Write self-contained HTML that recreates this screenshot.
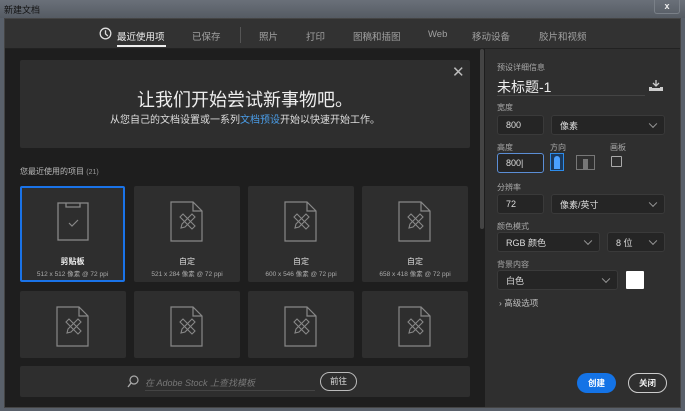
<!DOCTYPE html>
<html><head><meta charset="utf-8"><style>
*{margin:0;padding:0;box-sizing:border-box}
body{width:685px;height:411px;overflow:hidden;background:#59606a;font-family:"Liberation Sans","Noto Sans CJK SC",sans-serif;position:relative}
.a{position:absolute}
.t{color:#ddd;font-size:11px;white-space:nowrap}
.lbl{position:absolute;color:#a8a8a8;font-size:8px}
.box{position:absolute;background:#252525;border:1px solid #3a3a3a;border-radius:3px;color:#ddd;font-size:9px;padding-left:8px;display:flex;align-items:center}
.chev{position:absolute;right:8px;top:50%;width:6px;height:6px;border-right:1px solid #999;border-bottom:1px solid #999;transform:translateY(-70%) rotate(45deg)}
.card{position:absolute;background:#2e2e2e;border-radius:2px}
.nav{position:absolute;top:29px;font-size:9.5px;color:#a0a0a0}
</style></head><body>
<div class="a" style="left:0;top:0;width:685px;height:18px;background:linear-gradient(#6a7079,#555b63)"></div>
<div class="a t" style="left:4px;top:3px;font-size:9px;color:#111">新建文档</div>
<div class="a" style="left:654px;top:0;width:26px;height:14px;border:1px solid #7a8088;border-top:none;border-radius:0 0 3px 3px;color:#eee;font-size:9px;text-align:center;line-height:12px;font-weight:bold">x</div>
<div class="a" style="left:4px;top:18px;width:677px;height:390px;background:#1e1e1e;border:1px solid #444"></div>
<div class="a" style="left:5px;top:19px;width:675px;height:30px;background:#323232;border-bottom:1px solid #222"></div>
<svg class="a" style="left:99px;top:27px" width="13" height="13" viewBox="0 0 13 13"><circle cx="6.5" cy="6.5" r="5.3" fill="none" stroke="#ddd" stroke-width="1.3"/><path d="M6.5 3.3V6.8L8.8 9" fill="none" stroke="#ddd" stroke-width="1.3"/></svg>
<div class="nav" style="left:117px;color:#eee">最近使用项</div>
<div class="a" style="left:117px;top:45px;width:49px;height:2px;background:#eee"></div>
<div class="nav" style="left:192px">已保存</div>
<div class="a" style="left:240px;top:27px;width:1px;height:16px;background:#555"></div>
<div class="nav" style="left:259px">照片</div>
<div class="nav" style="left:306px">打印</div>
<div class="nav" style="left:353px">图稿和插图</div>
<div class="nav" style="left:428px">Web</div>
<div class="nav" style="left:472px">移动设备</div>
<div class="nav" style="left:539px">胶片和视频</div>
<div class="a" style="left:480px;top:49px;width:4px;height:180px;background:#444;border-radius:2px"></div>
<div class="a" style="left:485px;top:49px;width:195px;height:358px;background:#2f2f2f"></div>
<!-- banner -->
<div class="card" style="left:20px;top:60px;width:450px;height:88px"></div>
<div class="a" style="left:452px;top:63px;color:#bbb;font-size:15px">✕</div>
<div class="a" style="left:20px;width:450px;top:86px;text-align:center;color:#eee;font-size:18px">让我们开始尝试新事物吧。</div>
<div class="a" style="left:20px;width:450px;top:111px;text-align:center;color:#ddd;font-size:10px">从您自己的文档设置或一系列<span style="color:#4a9de8">文档预设</span>开始以快速开始工作。</div>
<div class="a" style="left:20px;top:166px;color:#bbb;font-size:8px">您最近使用的项目 <span style="font-size:7px;color:#999">(21)</span></div>
<!-- cards -->
<div class="card" style="left:20px;top:186px;width:105px;height:96px;border:2px solid #1a73e8"></div>
<svg class="a" style="left:57px;top:201px" width="32" height="40" viewBox="0 0 32 40"><rect x="1" y="2" width="30" height="37" fill="none" stroke="#888" stroke-width="1.3"/><path d="M9 2v4h14V2" fill="none" stroke="#888" stroke-width="1.3"/><path d="M12 22l3 3 6-6" fill="none" stroke="#888" stroke-width="1.2"/></svg>
<div class="a" style="left:20px;width:105px;top:256px;text-align:center;color:#eee;font-size:8px;font-weight:bold">剪贴板</div>
<div class="a" style="left:20px;width:105px;top:268px;text-align:center;color:#aaa;font-size:6.5px">512 x 512 像素 @ 72 ppi</div>
<div class="card" style="left:134px;top:186px;width:106px;height:96px"></div>
<div class="card" style="left:248px;top:186px;width:106px;height:96px"></div>
<div class="card" style="left:362px;top:186px;width:106px;height:96px"></div>
<div class="a" style="left:134px;width:106px;top:256px;text-align:center;color:#ddd;font-size:8px">自定</div>
<div class="a" style="left:134px;width:106px;top:268px;text-align:center;color:#aaa;font-size:6.5px">521 x 284 像素 @ 72 ppi</div>
<div class="a" style="left:248px;width:106px;top:256px;text-align:center;color:#ddd;font-size:8px">自定</div>
<div class="a" style="left:248px;width:106px;top:268px;text-align:center;color:#aaa;font-size:6.5px">600 x 546 像素 @ 72 ppi</div>
<div class="a" style="left:362px;width:106px;top:256px;text-align:center;color:#ddd;font-size:8px">自定</div>
<div class="a" style="left:362px;width:106px;top:268px;text-align:center;color:#aaa;font-size:6.5px">658 x 418 像素 @ 72 ppi</div>
<div class="card" style="left:20px;top:291px;width:106px;height:67px"></div>
<div class="card" style="left:134px;top:291px;width:106px;height:67px"></div>
<div class="card" style="left:248px;top:291px;width:106px;height:67px"></div>
<div class="card" style="left:362px;top:291px;width:106px;height:67px"></div>
<svg width="0" height="0" style="position:absolute"><defs><g id="doc"><path d="M1 1h22l9 9v30H1z M23 1v9h9" fill="none" stroke="#888" stroke-width="1.2"/><g fill="none" stroke="#888" stroke-width="1.1"><path d="M10 16l3-3 12 12-3 3z"/><path d="M22 13l3 3-10 10-4 1 1-4z"/></g></g></defs></svg>
<svg class="a" style="left:170px;top:201px" width="34" height="42"><use href="#doc"/></svg>
<svg class="a" style="left:284px;top:201px" width="34" height="42"><use href="#doc"/></svg>
<svg class="a" style="left:398px;top:201px" width="34" height="42"><use href="#doc"/></svg>
<svg class="a" style="left:56px;top:306px" width="34" height="42"><use href="#doc"/></svg>
<svg class="a" style="left:170px;top:306px" width="34" height="42"><use href="#doc"/></svg>
<svg class="a" style="left:284px;top:306px" width="34" height="42"><use href="#doc"/></svg>
<svg class="a" style="left:398px;top:306px" width="34" height="42"><use href="#doc"/></svg>
<!-- search -->
<div class="card" style="left:20px;top:366px;width:450px;height:31px"></div>
<svg class="a" style="left:127px;top:375px" width="12" height="13"><circle cx="7" cy="5" r="4" fill="none" stroke="#aaa" stroke-width="1.2"/><path d="M4 8L1 12" stroke="#aaa" stroke-width="1.4"/></svg>
<div class="a" style="left:145px;top:376px;color:#777;font-size:9px;font-style:italic">在 Adobe Stock 上查找模板</div>
<div class="a" style="left:145px;top:390px;width:170px;height:1px;background:#444"></div>
<div class="a" style="left:320px;top:372px;width:37px;height:19px;border:1px solid #bbb;border-radius:10px;color:#ddd;font-size:8.5px;text-align:center;line-height:17px">前往</div>
<!-- right panel -->
<div class="lbl" style="left:497px;top:62px">预设详细信息</div>
<div class="a" style="left:497px;top:77px;color:#eee;font-size:14px">未标题-1</div>
<div class="a" style="left:497px;top:95px;width:148px;height:1px;background:#444"></div>
<svg class="a" style="left:649px;top:80px" width="14" height="11"><path d="M7 0v6M4 3l3 3 3-3" fill="none" stroke="#ccc" stroke-width="1.3"/><path d="M0 7h3v1h8V7h3v4H0z" fill="#ccc"/></svg>
<div class="lbl" style="left:497px;top:102px">宽度</div>
<div class="box" style="left:497px;top:115px;width:47px;height:20px">800</div>
<div class="box" style="left:551px;top:115px;width:114px;height:20px;padding-left:8px">像素<i class="chev"></i></div>
<div class="lbl" style="left:497px;top:142px">高度</div>
<div class="lbl" style="left:550px;top:142px">方向</div>
<div class="lbl" style="left:610px;top:142px">画板</div>
<div class="box" style="left:497px;top:153px;width:47px;height:20px;border-color:#5b8ed6">800|</div>
<div class="a" style="left:550px;top:153px;width:14px;height:18px;border:1px solid #2d8ceb;background:#1b3a5e"></div>
<div class="a" style="left:554px;top:156px;width:6px;height:13px;background:#4aa0ff;border-radius:3px 3px 0 0"></div>
<div class="a" style="left:576px;top:155px;width:19px;height:15px;border:1px solid #777"></div>
<div class="a" style="left:583px;top:159px;width:5px;height:10px;background:#777"></div>
<div class="a" style="left:611px;top:156px;width:11px;height:11px;border:1px solid #aaa;border-radius:1px"></div>
<div class="lbl" style="left:497px;top:182px">分辨率</div>
<div class="box" style="left:497px;top:194px;width:47px;height:20px">72</div>
<div class="box" style="left:551px;top:194px;width:114px;height:20px">像素/英寸<i class="chev"></i></div>
<div class="lbl" style="left:497px;top:221px">颜色模式</div>
<div class="box" style="left:497px;top:232px;width:103px;height:20px">RGB 颜色<i class="chev"></i></div>
<div class="box" style="left:607px;top:232px;width:58px;height:20px">8 位<i class="chev"></i></div>
<div class="lbl" style="left:497px;top:259px">背景内容</div>
<div class="box" style="left:497px;top:270px;width:121px;height:20px">白色<i class="chev"></i></div>
<div class="a" style="left:626px;top:271px;width:18px;height:18px;background:#fff;border-radius:1px"></div>
<div class="a" style="left:499px;top:297px;color:#bbb;font-size:8.5px">›&nbsp;高级选项</div>
<div class="a" style="left:577px;top:373px;width:39px;height:20px;background:#1473e6;border-radius:10px;color:#fff;font-size:8.5px;font-weight:bold;text-align:center;line-height:20px">创建</div>
<div class="a" style="left:628px;top:373px;width:39px;height:20px;border:1px solid #ccc;border-radius:10px;color:#eee;font-size:8.5px;font-weight:bold;text-align:center;line-height:18px">关闭</div>
</body></html>
